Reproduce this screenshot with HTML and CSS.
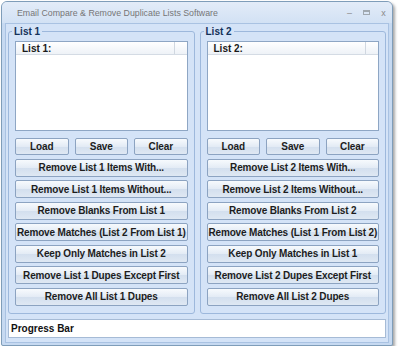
FILE: index.html
```html
<!DOCTYPE html>
<html lang="en">
<head>
  <meta charset="UTF-8" />
  <title>Email Compare &amp; Remove Duplicate Lists Software</title>
  <link rel="stylesheet" href="styles.css">
</head>
<body>

  <div class="window">
    <div class="titlebar">
      <span class="title">Email Compare &amp; Remove Duplicate Lists Software</span>
      <div class="controls">
        <span class="ctl">&ndash;</span>
        <span class="ctl max"></span>
        <span class="ctl">x</span>
      </div>
    </div>

    <div class="client">
      <div class="groups">
        <fieldset class="group">
          <legend>List 1</legend>
          <div class="listbox">
            <div class="list-header"><span>List 1:</span><span class="hdr-end"></span></div>
          </div>
          <div class="row3">
            <button>Load</button>
            <button>Save</button>
            <button>Clear</button>
          </div>
          <button class="wide">Remove List 1 Items With...</button>
          <button class="wide">Remove List 1 Items Without...</button>
          <button class="wide">Remove Blanks From List 1</button>
          <button class="wide">Remove Matches (List 2 From List 1)</button>
          <button class="wide">Keep Only Matches in List 2</button>
          <button class="wide">Remove List 1 Dupes Except First</button>
          <button class="wide">Remove All List 1 Dupes</button>
        </fieldset>

        <fieldset class="group">
          <legend>List 2</legend>
          <div class="listbox">
            <div class="list-header"><span>List 2:</span><span class="hdr-end"></span></div>
          </div>
          <div class="row3">
            <button>Load</button>
            <button>Save</button>
            <button>Clear</button>
          </div>
          <button class="wide">Remove List 2 Items With...</button>
          <button class="wide">Remove List 2 Items Without...</button>
          <button class="wide">Remove Blanks From List 2</button>
          <button class="wide">Remove Matches (List 1 From List 2)</button>
          <button class="wide">Keep Only Matches in List 1</button>
          <button class="wide">Remove List 2 Dupes Except First</button>
          <button class="wide">Remove All List 2 Dupes</button>
        </fieldset>
      </div>

      <div class="progress">Progress Bar</div>
    </div>
  </div>

</body>
</html>
```

FILE: styles.css
```css
body {
  margin: 0;
  background: #fff;
  font-family: 'Liberation Sans', Arial, sans-serif;
}
.window {
  margin: 1px 0 0 1px;
  width: 392px;
  height: 345px;
  box-sizing: border-box;
  background: #c6d9f1;
  border: 1px solid #7f9db9;
  border-radius: 6px 6px 2px 2px;
  box-shadow: 2px 2px 3px rgba(0,0,0,0.35);
  display: flex;
  flex-direction: column;
}
.titlebar {
  height: 21px;
  flex-shrink: 0;
  display: flex;
  align-items: center;
  padding: 0 5px 0 15px;
  background: linear-gradient(#e3ecf8, #d2e1f4);
  border-radius: 5px 5px 0 0;
}
.title {
  flex: 1;
  font-size: 8.8px;
  color: #767676;
}
.controls {
  display: flex;
  gap: 10px;
  align-items: center;
}
.ctl {
  font-size: 9px;
  color: #8a8a8a;
  width: 7px;
  text-align: center;
}
.ctl.max {
  height: 5px;
  width: 7px;
  border: 1px solid #a0a8b0;
  border-top-width: 2px;
  box-sizing: border-box;
}
.client {
  flex: 1;
  margin: 0 3px 3px 3px;
  background: #d4e3f7;
  border: 1px solid #a9c2e2;
  padding: 2px 2px 4px 2px;
  display: flex;
  flex-direction: column;
}
.groups {
  display: flex;
  gap: 5px;
}
.group {
  flex: 1;
  margin: 0;
  padding: 4px 6px 7px 6px;
  border: 1px solid #9db8dc;
  border-radius: 3px;
  display: flex;
  flex-direction: column;
  gap: 3.5px;
  min-width: 0;
}
.group legend {
  font-size: 10px;
  font-weight: bold;
  color: #15325a;
  padding: 0 2px;
  margin-left: -3px;
}
.listbox {
  height: 90px;
  box-sizing: border-box;
  flex-shrink: 0;
  background: #fff;
  border: 1px solid #8ea6c4;
  margin-bottom: 3.5px;
}
.list-header {
  height: 12px;
  display: flex;
  align-items: center;
  font-size: 10px;
  font-weight: bold;
  color: #1a1a1a;
  background: linear-gradient(#ffffff, #eef2f7);
  border-bottom: 1px solid #d4dbe4;
  padding-left: 6px;
}
.list-header span:first-child {
  flex: 1;
}
.hdr-end {
  width: 12px;
  height: 100%;
  border-left: 1px solid #d0d7e0;
}
.row3 {
  display: grid;
  grid-template-columns: 1fr 1fr 1fr;
  gap: 6px;
}
button {
  height: 18px;
  flex-shrink: 0;
  padding: 0;
  font-family: 'Liberation Sans', Arial, sans-serif;
  font-size: 10px;
  letter-spacing: -0.15px;
  font-weight: bold;
  color: #1d1d1d;
  background: linear-gradient(#f7fafd 0%, #e3ebf5 50%, #d3dfee 51%, #dfe8f3 100%);
  border: 1px solid #8ca3c1;
  border-radius: 2px;
  white-space: nowrap;
}
.row3 button {
  height: 17px;
}
.progress {
  margin-top: 5px;
  height: 19px;
  box-sizing: border-box;
  background: #fff;
  border: 1px solid #a6bbd6;
  padding-left: 2px;
  display: flex;
  align-items: center;
  font-size: 10px;
  font-weight: bold;
  color: #111;
}
```
